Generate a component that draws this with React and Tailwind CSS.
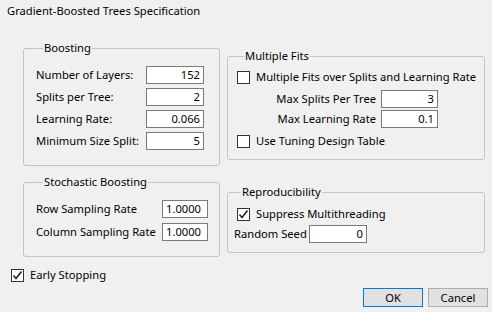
import React from "react";

function Check({ checked }) {
    return (
        <span className="w-[13px] h-[13px] border border-[#333333] bg-white flex items-center justify-center shrink-0">
            {checked && (
                <svg width="11" height="11" viewBox="0 0 11 11">
                    <polyline points="1.5,5.5 4,8.5 9.5,1.5" fill="none" stroke="#222" strokeWidth="1.6" />
                </svg>
            )}
        </span>
    );
}

function Field({ value, width, align = "right" }) {
    return (
        <div
            className={`h-[18px] shrink-0 ${width} border border-[#7a7a7a] bg-white flex items-center px-[3px] leading-none ${align === "right" ? "justify-end" : "justify-start"
                }`}
        >
            {value}
        </div>
    );
}

function Group({ title, className, children }) {
    return (
        <fieldset className={`border border-[#c4c4c4] rounded-[3px] ${className}`}>
            <legend className="ml-[7px] px-[1px] leading-[16px]">{title}</legend>
            {children}
        </fieldset>
    );
}

export default function App() {
    return (
        <div
            className="w-[492px] h-[312px] bg-[#f0f0f0] text-[11.2px] text-black overflow-hidden whitespace-nowrap"
            style={{ fontFamily: '"Noto Sans", "Open Sans", sans-serif' }}
        >
            {/* Title */}
            <div className="pt-[3px] pl-[7px] leading-[16px]">Gradient-Boosted Trees Specification</div>

            <div className="flex mt-[21px] pl-[11px] gap-[7px]">
                {/* Left column */}
                <div className="flex flex-col">
                    <Group title="Boosting" className="ml-[12px] w-[197px] pt-[10px] pb-[15px] pl-[12px] pr-[15px]">
                        <div className="flex flex-col gap-[4px]">
                            {[
                                ["Number of Layers:", "152"],
                                ["Splits per Tree:", "2"],
                                ["Learning Rate:", "0.066"],
                                ["Minimum Size Split:", "5"],
                            ].map(([label, value]) => (
                                <div key={label} className="flex items-center justify-between">
                                    <span>{label}</span>
                                    <Field value={value} width="w-[58px]" />
                                </div>
                            ))}
                        </div>
                    </Group>

                    <Group
                        title="Stochastic Boosting"
                        className="ml-[12px] mt-[8px] w-[197px] pt-[10px] pb-[15px] pl-[12px] pr-[11px]"
                    >
                        <div className="flex flex-col gap-[5px]">
                            {["Row Sampling Rate", "Column Sampling Rate"].map((label) => (
                                <div key={label} className="flex items-center justify-between">
                                    <span>{label}</span>
                                    <Field value="1.0000" width="w-[46px]" align="left" />
                                </div>
                            ))}
                        </div>
                    </Group>

                    <div className="flex items-center gap-[6px] mt-[10px] h-[16px]">
                        <Check checked />
                        <span>Early Stopping</span>
                    </div>
                </div>

                {/* Right column */}
                <div className="flex flex-col mt-[8px]">
                    <Group title="Multiple Fits" className="w-[258px] pt-[5px] pb-[10px] pl-[9px]">
                        <div className="flex items-center gap-[6px] h-[16px]">
                            <Check />
                            <span>Multiple Fits over Splits and Learning Rate</span>
                        </div>
                        <div className="flex flex-col gap-[2px] mt-[5px]">
                            {[
                                ["Max Splits Per Tree", "3"],
                                ["Max Learning Rate", "0.1"],
                            ].map(([label, value]) => (
                                <div key={label} className="flex items-center gap-[5px]">
                                    <span className="w-[139px] text-right">{label}</span>
                                    <Field value={value} width="w-[57px]" />
                                </div>
                            ))}
                        </div>
                        <div className="flex items-center gap-[6px] h-[16px] mt-[5px]">
                            <Check />
                            <span>Use Tuning Design Table</span>
                        </div>
                    </Group>

                    <Group title="Reproducibility" className="w-[258px] mt-[24px] pt-[6px] pb-[9px] pl-[6px]">
                        <div className="flex items-center gap-[6px] h-[16px] ml-[3px]">
                            <Check checked />
                            <span>Suppress Multithreading</span>
                        </div>
                        <div className="flex items-center gap-[3px] mt-[3px]">
                            <span className="w-[72px]">Random Seed</span>
                            <Field value="0" width="w-[58px]" />
                        </div>
                    </Group>
                </div>
            </div>

            {/* Buttons */}
            <div className="flex justify-end gap-[5px] pr-[4px] mt-[5px]">
                <button className="w-[60px] h-[19px] bg-[#e1e1e1] border border-[#0078d7] leading-none">OK</button>
                <button className="w-[60px] h-[19px] bg-[#e1e1e1] border border-[#adadad] leading-none">Cancel</button>
            </div>
        </div>
    );
}
